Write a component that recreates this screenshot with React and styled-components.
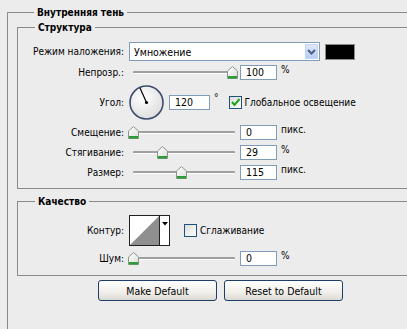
import styled, { createGlobalStyle } from 'styled-components'

const GlobalStyle = createGlobalStyle`
  body {
    margin: 0;
    background: #ececec;
    font-family: "DejaVu Sans Condensed", "DejaVu Sans", sans-serif;
    font-size: 10px;
    color: #000;
  }
`

const Page = styled.div`
  width: 407px;
  height: 329px;
  overflow: hidden;
  padding-top: 6px;
  box-sizing: border-box;
`

const Group = styled.fieldset`
  margin: ${p => p.$margin || '0'};
  padding: ${p => p.$padding || '0'};
  border: 1px solid #8a8a8a;
  width: ${p => p.$width}px;
  min-width: 0;
  box-sizing: border-box;
`

const Legend = styled.legend`
  margin-left: 17px;
  padding: 0 3px;
  font-weight: bold;
  line-height: 13px;
  font-size: 10px;
`

const Row = styled.div`
  display: flex;
  align-items: center;
  height: ${p => p.$h}px;
  margin-top: ${p => p.$mt || 0}px;
`

const Label = styled.div`
  width: 106px;
  text-align: right;
  flex-shrink: 0;
  white-space: nowrap;
`

const Select = styled.div`
  margin-left: 5px;
  width: 191px;
  height: 19px;
  box-sizing: border-box;
  border: 1px solid #7f9db9;
  background: #fff;
  display: flex;
  align-items: center;
  padding: 1px;
`

const SelectText = styled.span`
  flex: 1;
  padding-left: 3px;
  font-size: 10.5px;
`

const DropButton = styled.div`
  width: 13px;
  height: 100%;
  background: linear-gradient(#dfe8fb, #b9cdf6);
  border: 1px solid #c4d3f5;
  box-sizing: border-box;
  display: flex;
  align-items: center;
  justify-content: center;
`

const Swatch = styled.div`
  margin-left: 5px;
  width: 30px;
  height: 16px;
  box-sizing: border-box;
  border: 1px solid #8a8a8a;
  background: #000;
`

const SliderBox = styled.div`
  position: relative;
  margin-left: 4px;
  width: 110px;
  height: 14px;
  flex-shrink: 0;
`

const Track = styled.div`
  position: absolute;
  left: 5px;
  right: 3px;
  top: 6px;
  height: 2px;
  border-radius: 1px;
  background: #a0a0a0;
  border-bottom: 1px solid #fff;
`

const Thumb = styled.svg`
  position: absolute;
  top: 1px;
`

const NumberBox = styled.div`
  margin-left: ${p => p.$ml ?? 2}px;
  width: ${p => p.$w || 37}px;
  height: 15px;
  box-sizing: border-box;
  border: 1px solid #7f9db9;
  background: #fff;
  padding-left: 5px;
  line-height: 13px;
  font-size: 10.5px;
`

const Unit = styled.span`
  margin-left: 4px;
  align-self: flex-start;
  margin-top: ${p => p.$mt || 2}px;
`

const Dial = styled.div`
  position: relative;
  margin-left: 5px;
  width: 35px;
  height: 35px;
  flex-shrink: 0;
`

const Check = styled.div`
  margin-left: ${p => p.$ml}px;
  width: 13px;
  height: 13px;
  box-sizing: border-box;
  border: 1px solid #1c5180;
  background: linear-gradient(135deg, #dcdcd6, #fff);
  display: flex;
  align-items: center;
  justify-content: center;
`

const CheckText = styled.span`
  margin-left: 3px;
  white-space: nowrap;
`

const Contour = styled.div`
  margin-left: 5px;
  width: 41px;
  height: 31px;
  box-sizing: border-box;
  border: 1px solid #222;
  background: #fff;
  display: flex;
`

const ContourArrow = styled.div`
  width: 10px;
  border-left: 1px solid #222;
  display: flex;
  justify-content: center;
  padding-top: 6px;
  box-sizing: border-box;
`

const Buttons = styled.div`
  display: flex;
  gap: 7px;
  margin: 4px 0 0 81px;
`

const Button = styled.button`
  width: 119px;
  height: 21px;
  border: 1px solid #1f3d6a;
  border-radius: 3px;
  background: linear-gradient(#ffffff, #f0efea 60%, #dcdad2);
  font-family: inherit;
  font-size: 10.5px;
  color: #000;
  padding: 0;
`

const Slider = ({ pos }) => (
  <SliderBox>
    <Track />
    <Thumb width="11" height="13" viewBox="0 0 11 13" style={{ left: pos * 99 }}>
      <defs>
        <linearGradient id="tg" x1="0" y1="0" x2="1" y2="1">
          <stop offset="0" stopColor="#ffffff" />
          <stop offset="1" stopColor="#d8ddd8" />
        </linearGradient>
      </defs>
      <path d="M0.5 5 L5.5 0.5 L10.5 5 L10.5 12.5 L0.5 12.5 Z" fill="url(#tg)" stroke="#8a968a" />
      <rect x="1" y="10" width="9" height="2.5" fill="#2f9a3a" />
    </Thumb>
  </SliderBox>
)

const SliderRow = ({ label, pos, value, unit }) => (
  <Row $h={20}>
    <Label>{label}</Label>
    <Slider pos={pos} />
    <NumberBox>{value}</NumberBox>
    <Unit>{unit}</Unit>
  </Row>
)

const CheckMark = () => (
  <svg width="11" height="11" viewBox="0 0 11 11">
    <path d="M2 5 L4.5 8 L9.5 2" fill="none" stroke="#21a121" strokeWidth="2" />
  </svg>
)

const App = () => (
  <Page>
    <GlobalStyle />
    <Group $width={460} $margin="0 0 0 7px" $padding="2px 0 0 9px" style={{ height: 400 }}>
      <Legend>Внутренняя тень</Legend>
      <Group $width={430} $padding="8px 0 6px 0">
        <Legend>Структура</Legend>
        <Row $h={19}>
          <Label>Режим наложения:</Label>
          <Select>
            <SelectText>Умножение</SelectText>
            <DropButton>
              <svg width="9" height="6" viewBox="0 0 9 6">
                <path d="M1 1 L4.5 4.5 L8 1" fill="none" stroke="#4d6185" strokeWidth="2" />
              </svg>
            </DropButton>
          </Select>
          <Swatch />
        </Row>
        <Row $h={20} $mt={1}>
          <Label>Непрозр.:</Label>
          <Slider pos={1} />
          <NumberBox>100</NumberBox>
          <Unit>%</Unit>
        </Row>
        <Row $h={36} $mt={2}>
          <Label>Угол:</Label>
          <Dial>
            <svg width="35" height="35" viewBox="0 0 35 35">
              <defs>
                <radialGradient id="dg" cx="0.4" cy="0.35" r="0.7">
                  <stop offset="0" stopColor="#ffffff" />
                  <stop offset="1" stopColor="#dcdcdc" />
                </radialGradient>
              </defs>
              <circle cx="17.5" cy="17.5" r="16.5" fill="url(#dg)" stroke="#3c4a6e" strokeWidth="1.6" />
              <line x1="17.5" y1="17.5" x2="11" y2="3" stroke="#000" strokeWidth="1.2" />
              <circle cx="17.5" cy="17.5" r="1.6" fill="#000" />
            </svg>
          </Dial>
          <NumberBox $ml={5} $w={41}>120</NumberBox>
          <Unit $mt={8}>°</Unit>
          <Check $ml={10}>
            <CheckMark />
          </Check>
          <CheckText>Глобальное освещение</CheckText>
        </Row>
        <div style={{ marginTop: 2 }}>
          <SliderRow label="Смещение:" pos={0} value="0" unit="пикс." />
          <SliderRow label="Стягивание:" pos={0.29} value="29" unit="%" />
          <SliderRow label="Размер:" pos={0.485} value="115" unit="пикс." />
        </div>
      </Group>
      <Group $width={430} $margin="6px 0 0 0" $padding="7px 0 7px 0">
        <Legend>Качество</Legend>
        <Row $h={31}>
          <Label>Контур:</Label>
          <Contour>
            <svg width="29" height="29" viewBox="0 0 29 29">
              <polygon points="0,29 29,0 29,29" fill="#8f8f8f" />
            </svg>
            <ContourArrow>
              <svg width="6" height="4" viewBox="0 0 6 4">
                <polygon points="0,0 6,0 3,3.5" fill="#000" />
              </svg>
            </ContourArrow>
          </Contour>
          <Check $ml={14} />
          <CheckText>Сглаживание</CheckText>
        </Row>
        <Row $h={20} $mt={2}>
          <Label>Шум:</Label>
          <Slider pos={0} />
          <NumberBox>0</NumberBox>
          <Unit>%</Unit>
        </Row>
      </Group>
      <Buttons>
        <Button>Make Default</Button>
        <Button>Reset to Default</Button>
      </Buttons>
    </Group>
  </Page>
)

export default App
